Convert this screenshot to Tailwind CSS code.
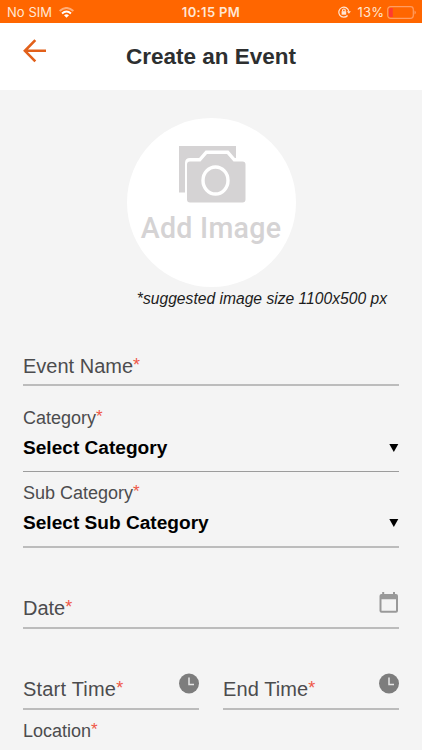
<!DOCTYPE html>
<html lang="en">
<head>
<meta charset="utf-8">
<title>Create an Event</title>
<script src="https://cdn.jsdelivr.net/npm/@tailwindcss/browser@4"></script>
</head>
<body class="w-[422px] h-[750px] overflow-hidden bg-[#f4f4f4] font-['Liberation_Sans',Arial,sans-serif] text-[#4c4c4e]">
<div class="h-[23px] bg-[#ff6600] grid grid-cols-[1fr_auto_1fr] items-center px-[6px] font-[Inter,sans-serif] text-[13px] leading-[24px] text-[#ffe6d4]">
  <div class="flex items-center gap-[7px] pl-px">
    <span class="tracking-[0.05px]">No SIM</span>
    <svg class="w-[15px] h-[11px]" viewBox="0 0 15 11" fill="none" stroke-width="2"><path d="M.6 4Q7.500 -2 14.400 4" stroke="#ffad77"/><path d="M3 6.500Q7.500 2.600 12 6.500" stroke="#fff"/><path d="M5 8.200Q7.500 6.200 10 8.200L7.500 10.700Z" fill="#fff"/></svg>
  </div>
  <span class="font-semibold tracking-[0.35px]">10:15 PM</span>
  <div class="flex items-center justify-end">
    <svg class="w-[13px] h-[12px] mr-[7px]" viewBox="0 0 13 12" fill="none" stroke="#ffe6d4" stroke-width="1.200"><path d="M9.600 9.500A5 5 0 1 1 10.800 5.500"/><path d="M8.900 5.200H12.900L10.900 7.700Z" fill="#ffe6d4" stroke="none"/><path d="M3.600 5.200H8.200V8.700H3.600Z" fill="#ffe6d4" stroke="none"/><path d="M4.600 5.500V4.300a1.300 1.300 0 0 1 2.600 0V5.500"/></svg>
    <span class="mr-[3px] tracking-[0.1px]">13%</span>
    <svg class="w-[29px] h-[13px]" viewBox="0 0 29 13"><rect x=".7" y=".7" width="25.600" height="11.600" rx="2.800" fill="none" stroke="#ff9d62" stroke-width="1.200"/><path d="M3.500 2H5.800V11H3.500Q2 11 2 9.500V3.500Q2 2 3.500 2Z" fill="#ff3b30"/><path d="M27.500 4.500Q28.800 5 28.800 6.500T27.500 8.500Z" fill="#ff9d62"/></svg>
  </div>
</div>
<header class="h-[67px] bg-white grid grid-cols-[1fr_auto_1fr] pl-[23px] pr-[23px]">
  <svg class="w-[24px] h-[24px] mt-[16px]" viewBox="0 0 24 24" fill="none" stroke="#e2601a" stroke-width="2.600"><path d="M23 11.800H2M12.300 1.200L1.900 11.800L12.300 22.400"/></svg>
  <h1 class="text-[22.5px] font-bold leading-[68px] text-[#2d2f30] whitespace-nowrap">Create an Event</h1>
</header>
<main class="px-[23px] pt-[28px]">
  <div class="w-[169px] h-[169px] mx-auto rounded-full bg-white flex flex-col items-center">
    <svg class="w-[67px] h-[57px] mt-[28px] ml-[2px]" viewBox="0 0 67 57"><path d="M0 0H57V30H0Z M0 30H20V46.500H0Z" fill="#d5d3d4"/><path d="M11 14H21L27.500 6.500H48.500L55 14H64Q66.500 14 66.500 17V53.500Q66.500 56.500 64 56.500H11Q8 56.500 8 53.500V17Q8 14 11 14Z" fill="none" stroke="#fff" stroke-width="4"/><path d="M11 15.500H21.500L28 8H48L54.500 15.500H63.500Q66.500 15.500 66.500 18.500V53.500Q66.500 56.500 63.500 56.500H11Q8 56.500 8 53.500V18.500Q8 15.500 11 15.500Z" fill="#d5d3d4"/><ellipse cx="36.500" cy="34.500" rx="12.500" ry="13.500" fill="#d5d3d4" stroke="#fff" stroke-width="3.400"/></svg>
    <span class="font-[Roboto,sans-serif] font-medium text-[28.6px] leading-[34px] mt-[8px] tracking-[0.25px] text-[#d5d3d4] whitespace-nowrap">Add Image</span>
  </div>
  <p class="text-[15.65px] leading-[24px] italic text-[#1c1c1c] text-right pr-[12px]">*suggested image size 1100x500 px</p>

  <div class="mt-[43px] h-[32px] border-b-2 border-[#bcbcbc] text-[20px] leading-[24px]">Event Name<span class="text-[#ef5747] text-[18px] leading-none align-[2px]">*</span></div>

  <div class="mt-[20px] h-[66px] border-b border-[#9c9c9c]">
    <div class="h-[24px] text-[18px] leading-[24px]">Category<span class="text-[#ef5747] text-[17px] leading-none align-[2px]">*</span></div>
    <div class="flex items-center justify-between mt-[6px] text-[19.1px] leading-[24px] font-bold text-black">Select Category
      <svg class="w-[10px] h-[8px]" viewBox="0 0 10 8"><path d="M.3 0H9.300L4.800 8Z"/></svg></div>
  </div>
  <div class="mt-[9px] h-[67px] border-b-2 border-[#bcbcbc]">
    <div class="h-[24px] text-[18px] leading-[24px]">Sub Category<span class="text-[#ef5747] text-[17px] leading-none align-[2px]">*</span></div>
    <div class="flex items-center justify-between mt-[6px] text-[19.1px] leading-[24px] font-bold text-black">Select Sub Category
      <svg class="w-[10px] h-[8px]" viewBox="0 0 10 8"><path d="M.3 0H9.300L4.800 8Z"/></svg></div>
  </div>

  <div class="mt-[44px] h-[37px] border-b-2 border-[#bcbcbc] flex justify-between">
    <span class="text-[20px] leading-[24px] mt-[4px]">Date<span class="text-[#ef5747] text-[18px] leading-none align-[2px]">*</span></span>
    <svg class="w-[20px] h-[21px]" viewBox="0 0 20 21"><path fill="#999" fill-rule="evenodd" d="M3.200 0H5.200V2H14V0H16V2H17Q19 2 19 4V18.800Q19 20.800 17 20.800H2.500Q.5 20.800 .5 18.800V4Q.5 2 2.500 2H3.200ZM2.500 7.200V18.800H17V7.200Z"/></svg>
  </div>

  <div class="mt-[44px] grid grid-cols-2 gap-[24px]">
    <div class="h-[37px] border-b-2 border-[#bcbcbc] flex justify-between">
      <span class="text-[20px] leading-[24px] mt-[4px] tracking-[0.2px]">Start Time<span class="text-[#ef5747] text-[18px] leading-none align-[2px]">*</span></span>
      <svg class="w-[20px] h-[21px]" viewBox="0 0 20 21"><circle cx="10" cy="10.500" r="10" fill="#7d7d7d"/><path d="M10 4.500V11.500H15" fill="none" stroke="#e6e6e6" stroke-width="1.500"/></svg>
    </div>
    <div class="h-[37px] border-b-2 border-[#bcbcbc] flex justify-between">
      <span class="text-[20px] leading-[24px] mt-[4px] tracking-[0.1px]">End Time<span class="text-[#ef5747] text-[18px] leading-none align-[2px]">*</span></span>
      <svg class="w-[20px] h-[21px]" viewBox="0 0 20 21"><circle cx="10" cy="10.500" r="10" fill="#7d7d7d"/><path d="M10 4.500V11.500H15" fill="none" stroke="#e6e6e6" stroke-width="1.500"/></svg>
    </div>
  </div>
  <div class="mt-[9px] text-[18px] leading-[24px]">Location<span class="text-[#ef5747] text-[17px] leading-none align-[2px]">*</span></div>
</main>
</body>
</html>
